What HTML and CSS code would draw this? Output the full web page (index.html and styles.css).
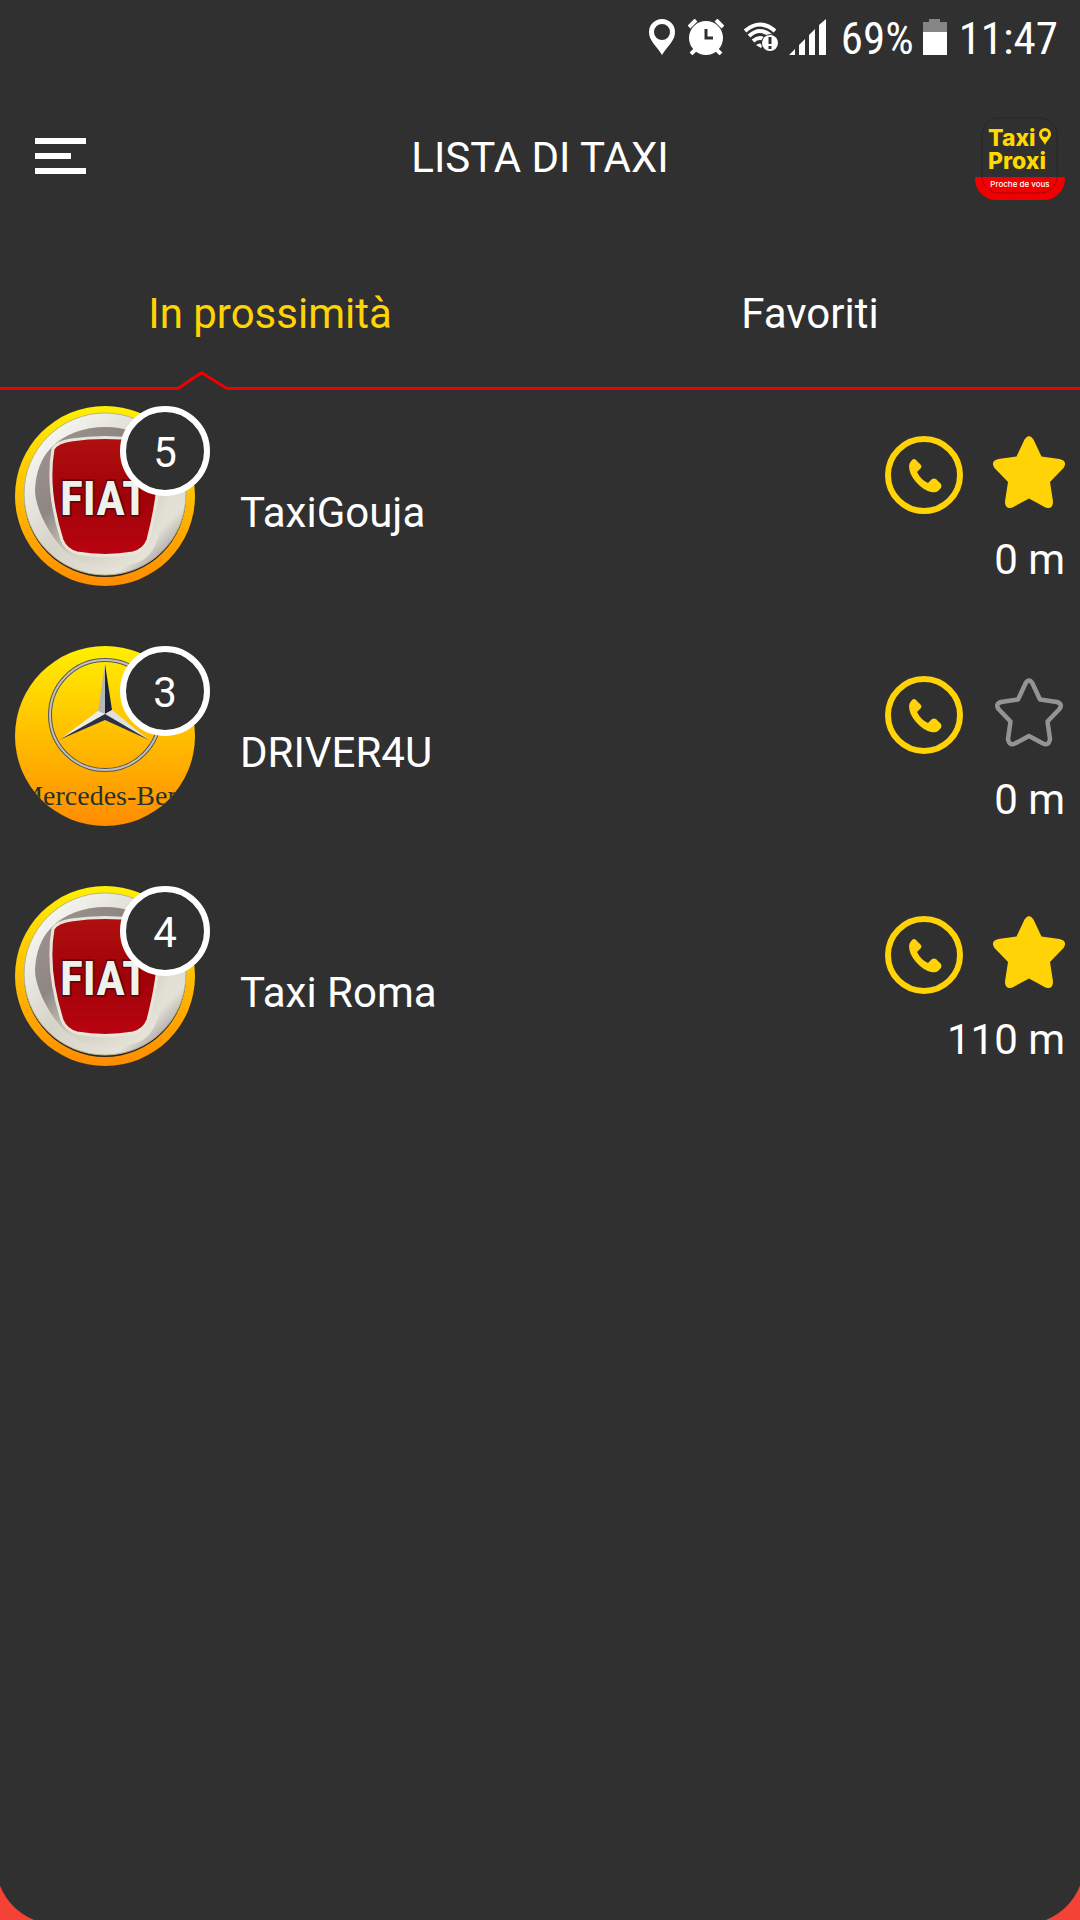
FILE: index.html
```html
<!DOCTYPE html>
<html lang="it">
<head>
<meta charset="utf-8">
<meta name="viewport" content="width=device-width, initial-scale=1">
<title>Lista di taxi</title>
<link rel="stylesheet" href="styles.css">
</head>
<body>
<svg class="defs" aria-hidden="true">
  <defs>
    <linearGradient id="sun" x1="0" y1="0" x2="0" y2="1">
      <stop offset="0" stop-color="#fff000"/>
      <stop offset="1" stop-color="#ff8c00"/>
    </linearGradient>
    <linearGradient id="chrome" x1="0" y1="0" x2="1" y2="1">
      <stop offset="0" stop-color="#d8d6cc"/>
      <stop offset=".15" stop-color="#f4f3ee"/>
      <stop offset=".5" stop-color="#d6d4c8"/>
      <stop offset=".78" stop-color="#e4e2d8"/>
      <stop offset=".88" stop-color="#a9a4a4"/>
      <stop offset="1" stop-color="#efeee8"/>
    </linearGradient>
    <linearGradient id="hollow" x1="0" y1="0" x2="1" y2="1">
      <stop offset="0" stop-color="#a09794"/>
      <stop offset=".35" stop-color="#8f8684"/>
      <stop offset=".6" stop-color="#d5d2c4"/>
      <stop offset="1" stop-color="#eceadf"/>
    </linearGradient>
    <linearGradient id="shield" x1="0" y1="0" x2="0" y2="1">
      <stop offset="0" stop-color="#b01010"/>
      <stop offset=".5" stop-color="#a00208"/>
      <stop offset="1" stop-color="#b90411"/>
    </linearGradient>
    <clipPath id="round"><circle cx="90" cy="90" r="90"/></clipPath>
    <symbol id="fiat" viewBox="0 0 180 180">
      <circle cx="90" cy="90" r="90" fill="url(#sun)"/>
      <circle cx="90" cy="90" r="81" fill="#2b2520"/>
      <circle cx="90" cy="88" r="81" fill="url(#chrome)" stroke="#b9b48c"/>
      <path d="M36 42C62 14 118 14 144 42C158 60 151 94 146 118C142 142 134 152 122 157C104 161 76 161 62 153C42 144 20 106 20 84C21 66 26 52 36 42Z" fill="url(#hollow)"/>
      <path d="M38 43Q42 36 56 34Q90 29 124 34Q138 36 142 43Q148 76 133 134Q129 144 118 147Q90 152 62 147Q51 144 47 134Q31 84 38 43Z" fill="url(#shield)" stroke="#e8e6db" stroke-width="3"/>
      <text class="fiat-word" x="89" y="109" text-anchor="middle">FIAT</text>
    </symbol>
    <symbol id="mercedes" viewBox="0 0 180 180">
      <circle cx="90" cy="90" r="90" fill="url(#sun)"/>
      <circle cx="90" cy="69" r="55" fill="none" stroke="#55565a" stroke-width="4"/>
      <circle cx="90" cy="69" r="55" fill="none" stroke="#c4c2b4" stroke-width="2"/>
      <path d="M90 18L83 65L90 68Z" fill="#b5b6b6"/>
      <path d="M90 18L97 64L90 68Z" fill="#1c2337"/>
      <path d="M44 94L83 65L90 68Z" fill="#ececed"/>
      <path d="M44 94L90 68V74Z" fill="#29314a"/>
      <path d="M134 94L97 64L90 68Z" fill="#dfe0e3"/>
      <path d="M134 94L90 68V74Z" fill="#29314a"/>
      <g clip-path="url(#round)"><text class="mercedes-word" x="91" y="159" text-anchor="middle">Mercedes-Benz</text></g>
    </symbol>
    <symbol id="phone" viewBox="0 0 78 78">
      <circle cx="39" cy="39" r="36" fill="none" stroke="#ffd305" stroke-width="6"/>
      <path d="M27 24Q29 22 31 24L36 29Q37 31 36 32L32 36Q36 44 43 47L47 43Q49 42 51 43L56 48Q57 50 56 52L53 55Q51 57 46 56Q38 54 31 46Q24 38 24 30Q24 27 27 24Z" fill="#ffd305"/>
    </symbol>
    <symbol id="star" viewBox="0 0 72 72">
      <path d="M31.500 3.500Q36 -3.500 40.500 3.500L48.500 20.500L66.500 23Q75 25 70.500 32L57 46L60 65.500Q60 74 52.500 71.500L36 62.500L19.500 71.500Q12 74 12 65.500L15 46L1.500 32Q-3 25 5.500 23L23.500 20.500Z" fill="#ffd305"/>
    </symbol>
    <symbol id="star-empty" viewBox="0 0 72 72">
      <path d="M32.500 7.500Q36 1.500 39.500 7.500L47 23.500L64 26Q70 28 66.500 33L54.500 45.500L57 63Q56 70 50 67.500L36 60L22 67.500Q16 70 15 63L17.500 45.500L5.500 33Q2 28 8 26L25 23.500Z" fill="none" stroke="#949494" stroke-width="4.500" stroke-linejoin="round"/>
    </symbol>
  </defs>
</svg>

<div class="page">
  <main class="screen">
    <div class="status">
      <svg width="26" height="36" viewBox="0 0 26 36" aria-label="Posizione"><path d="M13 0A13 13 0 0 0 0 13C0 22 7 26 13 36C19 26 26 22 26 13A13 13 0 0 0 13 0ZM13 5A8 8 0 1 1 13 21A8 8 0 0 1 13 5Z" fill="#fff" fill-rule="evenodd"/></svg>
      <svg class="alarm" width="36" height="36" viewBox="0 0 36 36" aria-label="Sveglia"><circle cx="18" cy="19" r="17" fill="#fff"/><path d="M1 8L8 1M35 8L28 1M8 30L3 35M28 30L33 35" stroke="#fff" stroke-width="4"/><path d="M18 10V19H25" fill="none" stroke="#303030" stroke-width="3"/></svg>
      <svg class="wifi" width="35" height="30" viewBox="0 0 35 30" aria-label="Wi-Fi"><g fill="none" stroke="#fff" stroke-width="4"><path d="M1 9Q16 -4 31 9"/><path d="M5 14Q16 4 27 14"/><path d="M9 19Q16 13 23 19"/></g><path d="M12 23Q16 20 19 23L17 26Z" fill="#fff"/><circle cx="26" cy="21" r="9" fill="#303030"/><circle cx="26" cy="21" r="8" fill="#fff"/><path d="M26 15V22M26 24V27" stroke="#303030" stroke-width="3"/></svg>
      <svg width="37" height="36" viewBox="0 0 37 36" aria-label="Segnale"><path d="M0 36L6 30V36ZM10 36V26L16 20V36ZM20 36V16L26 10V36ZM30 36V6L37 0V36Z" fill="#fff"/></svg>
      <span class="charge">69%</span>
      <svg width="24" height="36" viewBox="0 0 24 36" aria-label="Batteria"><path d="M0 3H6V0H17V3H24V14H0Z" fill="#858585"/><path d="M0 13H24V36H0Z" fill="#fff"/></svg>
      <time>11:47</time>
    </div>

    <header class="bar">
      <button class="menu" type="button" aria-label="Menu"><span></span><span class="short"></span><span></span></button>
      <h1>LISTA DI TAXI</h1>
      <svg class="brand" width="90" height="84" viewBox="0 0 90 84" aria-label="Taxi Proxi">
        <path d="M0 60H90V62A21 21 0 0 1 69 83H21A21 21 0 0 1 0 62Z" fill="#f00000"/>
        <rect x="7" y="1" width="75" height="75" rx="17" fill="none" stroke="#111" stroke-opacity=".5" stroke-dasharray="2 1"/>
        <g class="brand-name"><text x="13" y="29">Taxi</text><text x="13" y="52">Proxi</text></g>
        <path d="M70 11A6 6 0 0 0 64 17C64 21 68 23 70 28C72 23 76 21 76 17A6 6 0 0 0 70 11ZM70 14A3 3 0 1 1 70 20A3 3 0 0 1 70 14Z" fill="#ffd800" fill-rule="evenodd"/>
        <text class="brand-tag" x="45" y="70" text-anchor="middle">Proche de vous</text>
      </svg>
    </header>

    <nav class="tabs">
      <button class="tab active" type="button">In prossimità</button>
      <button class="tab" type="button">Favoriti</button>
    </nav>
    <div class="rule">
      <span class="rule-start"></span>
      <svg width="49" height="20" viewBox="0 0 49 20" aria-hidden="true"><path d="M0 18.500L23 3H24L49 18.500" fill="none" stroke="#f00000" stroke-width="3"/></svg>
      <span class="rule-end"></span>
    </div>

    <ul class="taxis">
      <li class="taxi">
        <div class="avatar"><svg width="180" height="180" aria-label="Fiat"><use href="#fiat"/></svg><span class="badge">5</span></div>
        <span class="name">TaxiGouja</span>
        <div class="side">
          <div class="actions">
            <button type="button" aria-label="Chiama"><svg width="78" height="78"><use href="#phone"/></svg></button>
            <button type="button" aria-label="Togli dai favoriti"><svg width="72" height="72"><use href="#star"/></svg></button>
          </div>
          <span class="distance">0 m</span>
        </div>
      </li>
      <li class="taxi">
        <div class="avatar"><svg width="180" height="180" aria-label="Mercedes-Benz"><use href="#mercedes"/></svg><span class="badge">3</span></div>
        <span class="name">DRIVER4U</span>
        <div class="side">
          <div class="actions">
            <button type="button" aria-label="Chiama"><svg width="78" height="78"><use href="#phone"/></svg></button>
            <button type="button" aria-label="Aggiungi ai favoriti"><svg width="72" height="72"><use href="#star-empty"/></svg></button>
          </div>
          <span class="distance">0 m</span>
        </div>
      </li>
      <li class="taxi">
        <div class="avatar"><svg width="180" height="180" aria-label="Fiat"><use href="#fiat"/></svg><span class="badge">4</span></div>
        <span class="name">Taxi Roma</span>
        <div class="side">
          <div class="actions">
            <button type="button" aria-label="Chiama"><svg width="78" height="78"><use href="#phone"/></svg></button>
            <button type="button" aria-label="Togli dai favoriti"><svg width="72" height="72"><use href="#star"/></svg></button>
          </div>
          <span class="distance">110 m</span>
        </div>
      </li>
    </ul>
  </main>
</div>
</body>
</html>
```
FILE: styles.css
```css
* {
  box-sizing: border-box;
}

body {
  margin: 0;
  background: #f44336;
  color: #fff;
  font: 42px/50px Roboto, "Liberation Sans", sans-serif;
}

button {
  padding: 0;
  border: 0;
  background: none;
  color: inherit;
  font: inherit;
  cursor: pointer;
}

svg {
  display: block;
  flex: none;
}

.defs {
  position: absolute;
  width: 0;
  height: 0;
}

.page {
  display: flex;
  min-height: 100vh;
  overflow: hidden;
}

/* The panel runs past the edges so that only part of its corners shows. */
.screen {
  flex: 1;
  margin: 0 -4px -4px;
  padding: 0 4px 4px;
  border-radius: 0 0 60px 60px;
  background: #303030;
}

.status {
  display: flex;
  align-items: center;
  justify-content: flex-end;
  height: 74px;
  padding-right: 22px;
  font: 45px/50px "Roboto Condensed", Roboto, sans-serif;
}

.status span,
.status time {
  padding-top: 4px;
}

.alarm {
  margin-left: 13px;
}

.wifi {
  margin: 0 10px 0 20px;
}

.charge {
  margin: 0 9px 0 15px;
}

.status time {
  margin-left: 12px;
}

.bar {
  display: grid;
  grid-template-columns: 90px 1fr 90px;
  align-items: center;
  height: 168px;
  padding: 0 15px;
}

.menu {
  display: flex;
  flex-direction: column;
  gap: 9px;
  width: 51px;
  margin: 0 0 4px 20px;
}

.menu span {
  height: 6px;
  background: #fff;
}

.menu .short {
  width: 36px;
}

.bar h1 {
  margin: 0;
  font-size: 42px;
  font-weight: 400;
  text-align: center;
}

.brand {
  margin-top: 2px;
}

.brand-name {
  fill: #ffd800;
  font: 800 23px/23px Inter, sans-serif;
}

.brand-tag {
  fill: #fff;
  font: 500 8px/10px Inter, sans-serif;
}

.tabs {
  display: grid;
  grid-template-columns: 1fr 1fr;
  height: 128px;
  padding-top: 16px;
}

.tab.active {
  color: #ffd305;
}

.rule {
  display: flex;
  align-items: flex-end;
}

.rule-start,
.rule-end {
  height: 3px;
  background: #f00000;
}

.rule-start {
  width: 178px;
}

.rule-end {
  flex: 1;
}

.taxis {
  display: grid;
  gap: 40px;
  margin: 0;
  padding: 0;
  list-style: none;
}

.taxi {
  display: flex;
  min-height: 200px;
  padding: 16px 15px 0;
}

.avatar {
  position: relative;
  flex: none;
  width: 180px;
}

.badge {
  position: absolute;
  top: 0;
  right: -15px;
  width: 90px;
  height: 90px;
  padding-top: 16px;
  border: 6px solid #fff;
  border-radius: 50%;
  background: #303030;
  text-align: center;
}

.name {
  flex: 1;
  padding: 82px 0 0 45px;
}

.side {
  display: flex;
  flex-direction: column;
  align-items: flex-end;
  gap: 21px;
  padding-top: 30px;
}

.actions {
  display: flex;
  align-items: flex-start;
  gap: 30px;
}

.fiat-word {
  fill: #eef1ec;
  stroke: #5b0508;
  stroke-width: 3px;
  paint-order: stroke;
  font: 700 48px/48px "Roboto Condensed", Roboto, sans-serif;
}

.mercedes-word {
  fill: #26332f;
  font: 28px/28px "Liberation Serif", serif;
}
```
